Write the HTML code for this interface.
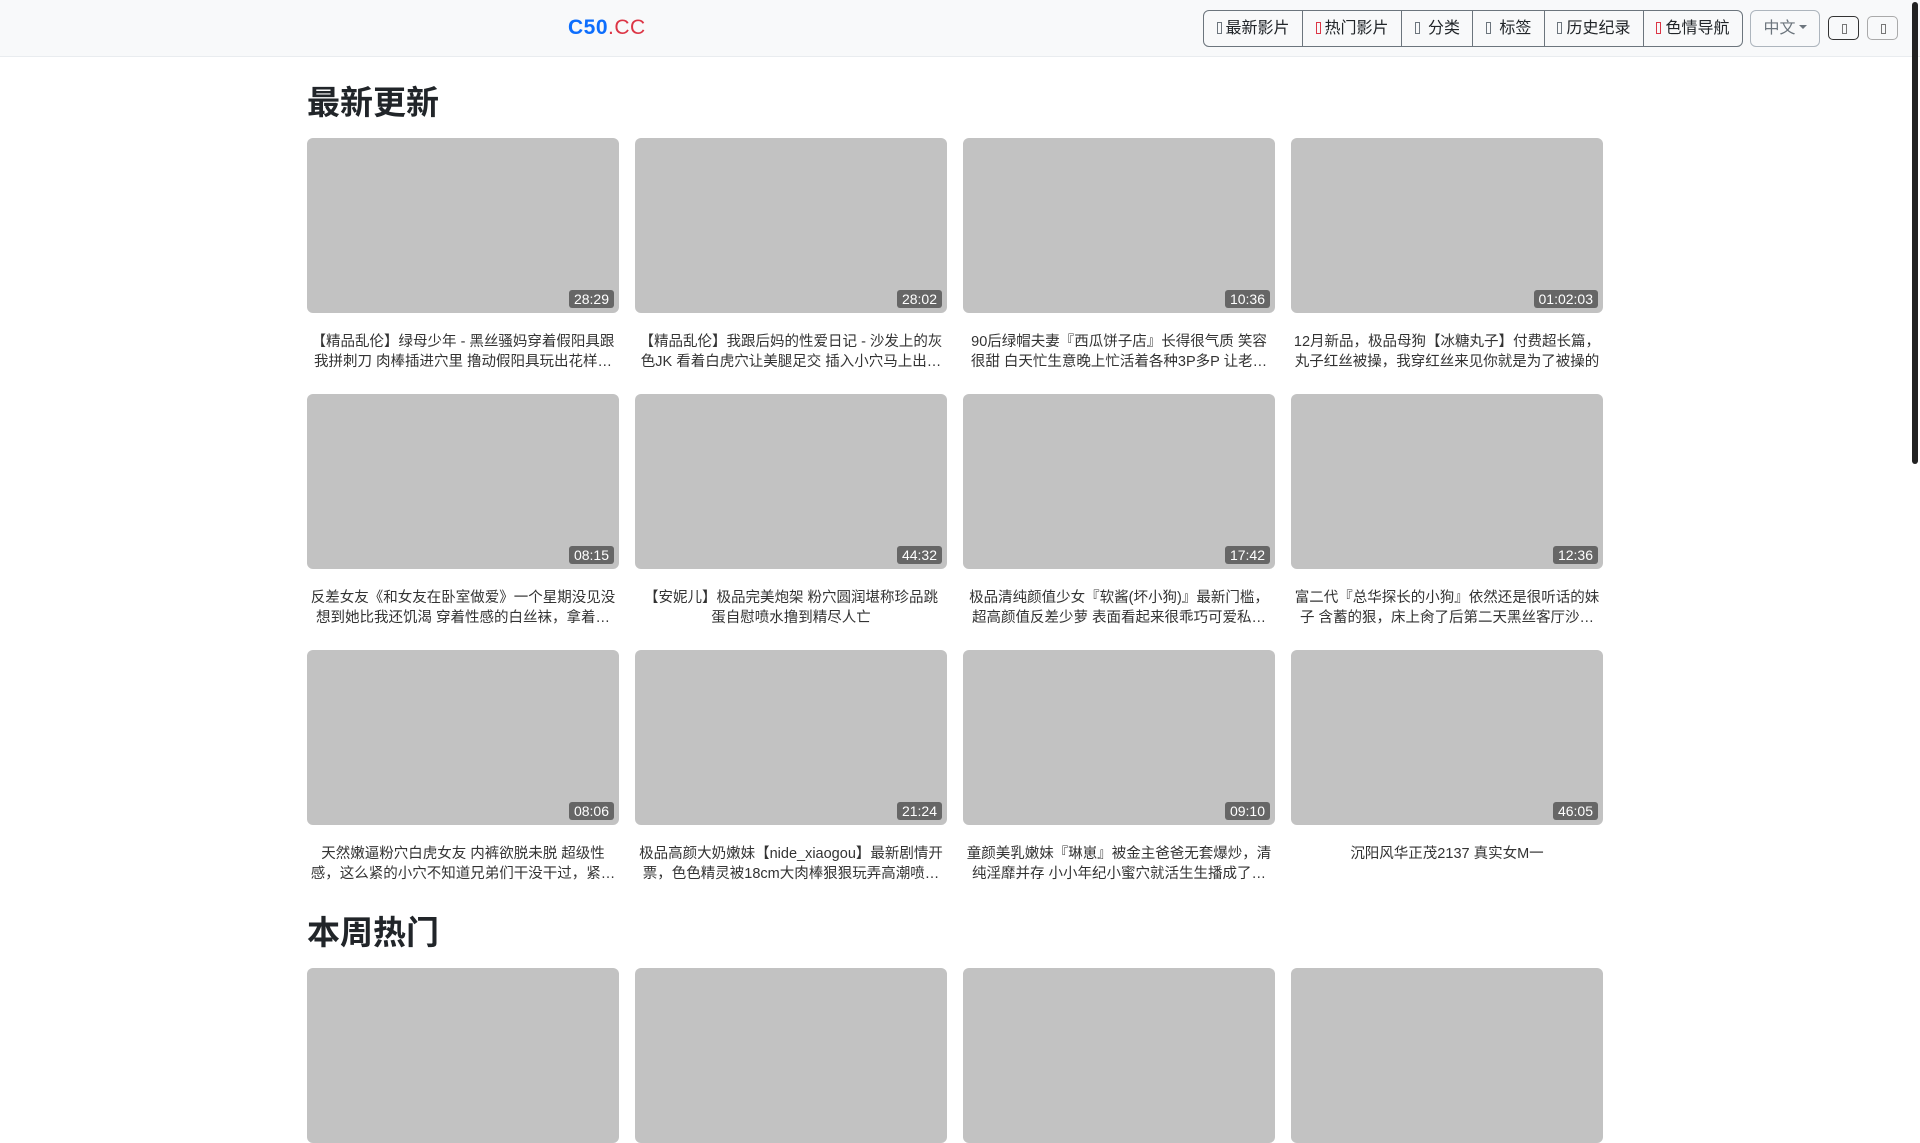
<!DOCTYPE html>
<html><head><meta charset="utf-8"><style>
*{box-sizing:border-box;margin:0;padding:0}
body{width:1920px;height:1080px;overflow:hidden;background:#fff;font-family:"Liberation Sans","Noto Sans CJK SC",sans-serif;color:#212529;position:relative}
.nav{position:absolute;left:0;top:0;width:1920px;height:57px;background:#f8f9fa;border-bottom:1px solid #e9ecef}
.logo{position:absolute;left:568px;top:16px;font-size:21px;font-weight:bold;color:#0d6efd;letter-spacing:0.5px}
.logo span{color:#dc3545;font-weight:normal}
.grp{position:absolute;left:1203px;top:10px;height:37px;display:flex;border:1px solid #6c757d;border-radius:6px;overflow:hidden}
.grp div{height:35px;line-height:35px;font-size:16px;padding:0 12.5px;border-left:1px solid #6c757d;color:#212529;white-space:nowrap}
.grp div:first-child{border-left:none}
.grp i{display:inline-block;width:5px;height:12px;border:1px solid #6c757d;margin-right:4px;vertical-align:-1px}
.grp i.r{border-color:#dc3545}
.lang{position:absolute;left:1750px;top:10px;width:70px;height:37px;border:1px solid #adb5bd;border-radius:6px;font-size:16px;line-height:35px;color:#6c757d;text-align:center}
.lang:after{content:"";display:inline-block;border:4px solid transparent;border-top-color:#6c757d;margin-left:3px;vertical-align:0}
.sb{position:absolute;top:16px;width:31px;height:24px;border-radius:5px;border:1px solid #333}
.sb.b{border-color:#aaa}
.sb:after{content:"";position:absolute;left:13px;top:7px;width:3px;height:8px;border:1px solid #777}
.scroll{position:absolute;left:1912px;top:2px;width:6px;height:462px;border-radius:3px;background:#222}
h2{position:absolute;left:307px;font-size:33px;font-weight:bold;color:#212529}
.card{position:absolute;width:312px}
.th{height:175px;background:#c2c2c2;border-radius:6px;position:relative}
.d{position:absolute;right:5px;bottom:5px;background:#666;color:#fff;font-size:14px;padding:1px 5px;border-radius:3px;line-height:16px}
.t{margin-top:19px;font-size:14.5px;line-height:20px;text-align:center;color:#333;padding:0 2px;height:40px;overflow:hidden;display:-webkit-box;-webkit-line-clamp:2;-webkit-box-orient:vertical}
</style></head><body>
<div class="nav">
<div class="logo">C50<span>.CC</span></div>
<div class="grp"><div><i></i>最新影片</div><div><i class="r"></i>热门影片</div><div><i></i> 分类</div><div><i></i> 标签</div><div><i></i>历史纪录</div><div><i class="r"></i>色情导航</div></div>
<div class="lang">中文</div>
<div class="sb" style="left:1828px"></div><div class="sb b" style="left:1867px"></div>
</div>
<div class="scroll"></div>
<h2 style="top:76px">最新更新</h2>
<h2 style="top:906px">本周热门</h2>

<div class="card" style="left:307px;top:138px"><div class="th"><span class="d">28:29</span></div><div class="t">【精品乱伦】绿母少年 - 黑丝骚妈穿着假阳具跟我拼刺刀 肉棒插进穴里 撸动假阳具玩出花样了起来</div></div>
<div class="card" style="left:635px;top:138px"><div class="th"><span class="d">28:02</span></div><div class="t">【精品乱伦】我跟后妈的性爱日记 - 沙发上的灰色JK 看着白虎穴让美腿足交 插入小穴马上出来了</div></div>
<div class="card" style="left:963px;top:138px"><div class="th"><span class="d">10:36</span></div><div class="t">90后绿帽夫妻『西瓜饼子店』长得很气质 笑容很甜 白天忙生意晚上忙活着各种3P多P 让老公看着</div></div>
<div class="card" style="left:1291px;top:138px"><div class="th"><span class="d">01:02:03</span></div><div class="t">12月新品，极品母狗【冰糖丸子】付费超长篇，丸子红丝被操，我穿红丝来见你就是为了被操的</div></div>

<div class="card" style="left:307px;top:394px"><div class="th"><span class="d">08:15</span></div><div class="t">反差女友《和女友在卧室做爱》一个星期没见没想到她比我还饥渴 穿着性感的白丝袜，拿着手机拍</div></div>
<div class="card" style="left:635px;top:394px"><div class="th"><span class="d">44:32</span></div><div class="t">【安妮儿】极品完美炮架 粉穴圆润堪称珍品跳蛋自慰喷水撸到精尽人亡</div></div>
<div class="card" style="left:963px;top:394px"><div class="th"><span class="d">17:42</span></div><div class="t">极品清纯颜值少女『软酱(坏小狗)』最新门槛，超高颜值反差少萝 表面看起来很乖巧可爱私下超级反差</div></div>
<div class="card" style="left:1291px;top:394px"><div class="th"><span class="d">12:36</span></div><div class="t">富二代『总华探长的小狗』依然还是很听话的妹子 含蓄的狠，床上肏了后第二天黑丝客厅沙发再来一炮</div></div>

<div class="card" style="left:307px;top:650px"><div class="th"><span class="d">08:06</span></div><div class="t">天然嫩逼粉穴白虎女友 内裤欲脱未脱 超级性感，这么紧的小穴不知道兄弟们干没干过，紧到夹死</div></div>
<div class="card" style="left:635px;top:650px"><div class="th"><span class="d">21:24</span></div><div class="t">极品高颜大奶嫩妹【nide_xiaogou】最新剧情开票，色色精灵被18cm大肉棒狠狠玩弄高潮喷水不断</div></div>
<div class="card" style="left:963px;top:650px"><div class="th"><span class="d">09:10</span></div><div class="t">童颜美乳嫩妹『琳崽』被金主爸爸无套爆炒，清纯淫靡并存 小小年纪小蜜穴就活生生播成了爸爸的形状</div></div>
<div class="card" style="left:1291px;top:650px"><div class="th"><span class="d">46:05</span></div><div class="t">沉阳风华正茂2137 真实女M一</div></div>

<div class="card" style="left:307px;top:968px"><div class="th"></div></div>
<div class="card" style="left:635px;top:968px"><div class="th"></div></div>
<div class="card" style="left:963px;top:968px"><div class="th"></div></div>
<div class="card" style="left:1291px;top:968px"><div class="th"></div></div>
</body></html>
